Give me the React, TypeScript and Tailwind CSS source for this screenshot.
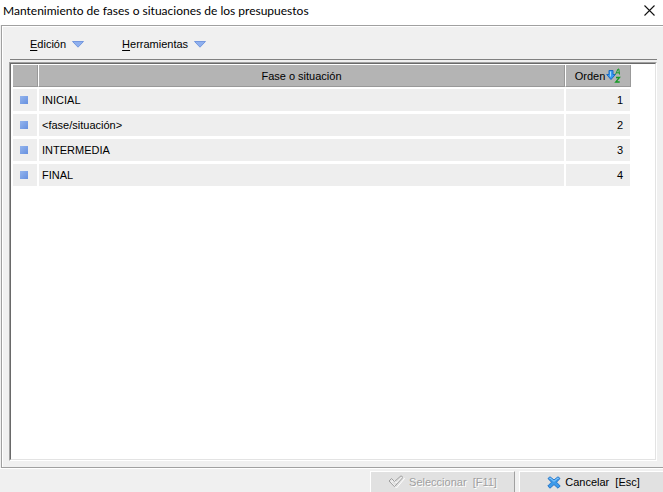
import React from 'react'

interface Phase {
  name: string;
  order: number;
}

interface MenuButtonProps {
  label: string;
}

const phases: Phase[] = [
  { name: 'INICIAL', order: 1 },
  { name: '<fase/situación>', order: 2 },
  { name: 'INTERMEDIA', order: 3 },
  { name: 'FINAL', order: 4 },
]

const MenuButton: React.FC<MenuButtonProps> = ({ label }) => {
  return (
    <button type="button" className="flex items-center gap-1.5">
      <span>
        <span className="underline underline-offset-2">{label[0]}</span>
        {label.slice(1)}
      </span>
      <svg width="12" height="7" viewBox="0 0 12 7" aria-hidden="true">
        <path d="M0.5 0.5h11L6 6.2z" fill="#8fb0ee" stroke="#6c92dc" strokeWidth="0.9" />
      </svg>
    </button>
  )
}

const SortIcon: React.FC = () => {
  return (
    <svg width="15" height="16" viewBox="0 0 15 16" aria-hidden="true">
      <path d="M3 2.5h4v4h2.3L5 11.5 0.7 6.5H3z" fill="#3a9cf3" stroke="#1b69c4" />
      <path d="M4 3.5h1v5H4z" fill="#a5dcff" />
      <path d="M9.5 6.5L12 1h.8l.7 5.5M10.8 4.8h2.4" fill="none" stroke="#159a25" />
      <path d="M10 9.5h3.5L9.7 14h4" fill="none" stroke="#159a25" strokeWidth="1.3" />
    </svg>
  )
}

const CheckIcon: React.FC = () => {
  return (
    <svg width="17" height="14" viewBox="0 0 17 14" aria-hidden="true">
      <path d="M2 6.5l2.5-2.5 3 3L13.5 1l2 1.5L7.5 12z" transform="translate(1 1)" fill="none" stroke="#ffffff" />
      <path d="M1 6l2.5-2.5 3 3L13 .8l2 1.5L6.5 11.7z" fill="none" stroke="#a0a0a0" />
    </svg>
  )
}

const CancelIcon: React.FC = () => {
  return (
    <svg width="14" height="13" viewBox="0 0 14 13" aria-hidden="true">
      <path
        d="M1 2.5L3 .8 7 4 11 .8 13 2.5 9.5 6.2 13.2 10 11 12.2 7 8.6 3 12.2.8 10 4.5 6.2z"
        fill="#3d9bea"
        stroke="#2474c8"
      />
      <path d="M2.3 2.4L3 1.9 7 5.3l4-3.4.7.6" fill="none" stroke="#8fd0ff" />
    </svg>
  )
}

export default function App() {
  return (
    <main className="flex h-screen flex-col overflow-hidden bg-[#f0f0f0] font-['Liberation_Sans',sans-serif] text-[11px] leading-4 text-black">
      <header className="flex h-[25px] shrink-0 items-center justify-between bg-white pr-2 pb-1 pl-[3px]">
        <h1 className="font-['Lato',sans-serif] text-[12px]">
          Mantenimiento de fases o situaciones de los presupuestos
        </h1>
        <button type="button" aria-label="Cerrar">
          <svg width="11" height="11" viewBox="0 0 11 11" aria-hidden="true">
            <path d="M.5.5l10 10M10.5.5l-10 10" stroke="#111" strokeWidth="1.1" />
          </svg>
        </button>
      </header>

      <section className="ml-px flex min-h-0 flex-1 flex-col border-y border-l border-[#a0a0a0]">
        <div className="flex min-h-0 flex-1 flex-col border-t border-l border-white pr-1.5 pb-1.5 pl-1.5">
          <nav className="ml-px flex h-[33px] shrink-0 items-center gap-[38px] border-b border-[#808080] pt-0.5 pl-5">
            <MenuButton label="Edición" />
            <MenuButton label="Herramientas" />
          </nav>

          <div className="mt-0.5 flex min-h-0 flex-1 border border-t-[#a0a0a0] border-r-white border-b-white border-l-[#a0a0a0]">
            <div className="flex-1 border border-t-[#696969] border-r-[#e3e3e3] border-b-[#e3e3e3] border-l-[#696969] bg-white pt-px pr-6 pl-0.5">
              <table className="w-full table-fixed border-separate border-spacing-0">
                <thead>
                  <tr className="h-[22px] bg-[#b4b4b4]">
                    <th className="w-[25px] border-r border-b border-[#999]" aria-label="Estado" />
                    <th className="border-r border-b border-l border-[#999] border-l-white p-0 font-normal">
                      Fase o situación
                    </th>
                    <th className="w-[66px] border-r border-b border-l border-[#999] border-l-white p-0 font-normal">
                      <span className="flex items-center justify-center gap-px">
                        Orden
                        <SortIcon />
                      </span>
                    </th>
                  </tr>
                </thead>
                <tbody>
                  {phases.map((phase) => (
                    <tr key={phase.order} className="h-[25px] bg-[#eee]">
                      <td className="border-t-2 border-r border-b border-white py-0 pr-0 pl-[7px]">
                        <span className="block size-2 bg-linear-to-br from-[#94b5ee] to-[#6790df]" />
                      </td>
                      <td className="border-x border-t-2 border-b border-white py-0 pr-0 pl-[3px]">{phase.name}</td>
                      <td className="border-x border-t-2 border-b border-white py-0 pr-[7px] pl-0 text-right">
                        {phase.order}
                      </td>
                    </tr>
                  ))}
                </tbody>
              </table>
            </div>
          </div>
        </div>
      </section>

      <footer className="flex h-6 shrink-0 justify-end gap-1 border-t border-white pt-0.5">
        <button
          type="button"
          disabled
          className="flex w-[145px] items-center justify-center gap-1 border-t border-r border-l border-white border-r-[#a0a0a0] bg-[#e1e1e1] whitespace-pre text-[#a0a0a0] [text-shadow:1px_1px_0_white]"
        >
          <CheckIcon />
          {'Seleccionar  [F11]'}
        </button>
        <button
          type="button"
          className="flex w-[144px] items-center justify-center gap-1 border-t border-l border-white bg-[#e1e1e1] pl-1 whitespace-pre"
        >
          <CancelIcon />
          {'Cancelar  [Esc]'}
        </button>
      </footer>
    </main>
  )
}
